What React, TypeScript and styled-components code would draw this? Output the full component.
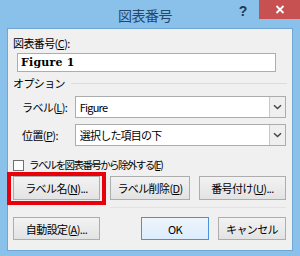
import styled, { createGlobalStyle } from 'styled-components';

const GlobalStyle = createGlobalStyle`
  html, body {
    margin: 0;
    padding: 0;
    background: #ffffff;
  }
  body {
    font-family: "Noto Sans CJK JP", "Noto Sans", sans-serif;
  }
`;

const Window = styled.div`
  width: 300px;
  height: 256px;
  box-sizing: border-box;
  background: #89c1eb;
  padding: 0 7px 5px;
  display: flex;
  flex-direction: column;
  overflow: hidden;
`;

const TitleBar = styled.div`
  height: 28px;
  display: grid;
  grid-template-columns: 1fr auto auto;
  align-items: start;
  margin-right: -7px;
`;

const Title = styled.div`
  grid-column: 1 / 2;
  padding-top: 5px;
  padding-left: 50px;
  text-align: center;
  font-size: 14px;
  line-height: 20px;
  color: #24476b;
  letter-spacing: -0.5px;
`;

const HelpMark = styled.div`
  width: 20px;
  margin-right: 6px;
  padding-top: 2px;
  text-align: center;
  font-family: "Liberation Sans", Arial, sans-serif;
  font-weight: bold;
  font-size: 14px;
  line-height: 18px;
  color: #1f3a55;
`;

const CloseButton = styled.div`
  width: 41px;
  height: 19px;
  background: #c75050;
  display: flex;
  align-items: center;
  justify-content: center;
`;

const Client = styled.div`
  flex: 1;
  background: #f0f0f0;
  border: 1px solid #6fa6d4;
  padding: 6px 6px 0 5px;
  display: flex;
  flex-direction: column;
  font-size: 11px;
  color: #000;
`;

const Label = styled.div`
  line-height: 16px;
  white-space: nowrap;
  letter-spacing: -0.6px;
`;

const TextBox = styled.div`
  margin: 2px 0 0 4px;
  width: 259px;
  height: 19px;
  box-sizing: border-box;
  background: #fff;
  border: 1px solid #abadb3;
  padding-left: 3px;
  font-family: "DejaVu Serif", "Liberation Serif", serif;
  font-weight: bold;
  font-size: 11px;
  line-height: 17px;
  letter-spacing: 0.2px;
`;

const Legend = styled.div`
  margin-top: 3px;
  display: flex;
  align-items: center;
  gap: 6px;
  line-height: 16px;
  letter-spacing: -0.6px;
  &::after {
    content: '';
    flex: 1;
    height: 1px;
    background: #dcdcdc;
    margin-right: -1px;
  }
`;

const FieldRow = styled.div<{ $gap: number }>`
  margin-top: ${(p) => p.$gap}px;
  display: flex;
  align-items: center;
`;

const FieldLabel = styled.div`
  width: 62px;
  box-sizing: border-box;
  padding-left: 9px;
  line-height: 16px;
  white-space: nowrap;
  letter-spacing: -0.6px;
`;

const Select = styled.div`
  width: 212px;
  height: 22px;
  box-sizing: border-box;
  background: #fff;
  border: 1px solid #acacac;
  display: flex;
  align-items: stretch;
`;

const SelectValue = styled.div`
  flex: 1;
  padding-left: 4px;
  line-height: 20px;
  font-size: 11px;
  letter-spacing: -0.8px;
`;

const DropButton = styled.div`
  width: 15px;
  border-left: 1px solid #c8c8c8;
  background: #efefef;
  display: flex;
  align-items: center;
  justify-content: center;
`;

const CheckRow = styled.div`
  margin-top: 11px;
  display: flex;
  align-items: center;
  gap: 5px;
  line-height: 16px;
  font-size: 10.5px;
  letter-spacing: -1.6px;
`;

const CheckBox = styled.div`
  width: 11px;
  height: 11px;
  box-sizing: border-box;
  background: #fff;
  border: 1px solid #707070;
`;

const ButtonRow = styled.div<{ $top: number }>`
  margin-top: ${(p) => p.$top}px;
  display: flex;
`;

const Button = styled.div<{ $width: number; $gap?: number; $default?: boolean; $height?: number }>`
  position: relative;
  width: ${(p) => p.$width}px;
  height: ${(p) => p.$height ?? 23}px;
  margin-left: ${(p) => p.$gap ?? 0}px;
  box-sizing: border-box;
  border: 1px solid ${(p) => (p.$default ? '#4a93dc' : '#adadad')};
  background: ${(p) => (p.$default ? 'linear-gradient(#eef5fc, #dcecfc)' : 'linear-gradient(#f2f2f2, #e3e3e3)')};
  display: flex;
  align-items: center;
  justify-content: center;
  line-height: 16px;
  white-space: nowrap;
  letter-spacing: -0.6px;
`;

const Highlight = styled.div`
  position: absolute;
  left: -7px;
  top: -5px;
  right: -7px;
  bottom: -6px;
  border: 4px solid #e8000b;
  pointer-events: none;
`;

const Separator = styled.div`
  margin: 7px 0 0 97px;
  height: 1px;
  background: #e2e2e2;
`;

const Chevron = () => (
  <svg width="9" height="6" viewBox="0 0 9 6">
    <path d="M1 1.2 L4.5 4.6 L8 1.2" fill="none" stroke="#444" strokeWidth="1.4" />
  </svg>
);

const App = () => {
  return (
    <>
      <GlobalStyle />
      <Window>
        <TitleBar>
          <Title>図表番号</Title>
          <HelpMark>?</HelpMark>
          <CloseButton>
            <svg width="10" height="9" viewBox="0 0 10 9">
              <path d="M1.5 1 L8.5 8 M8.5 1 L1.5 8" stroke="#fff" strokeWidth="1.8" />
            </svg>
          </CloseButton>
        </TitleBar>
        <Client>
          <Label>
            図表番号(<u>C</u>):
          </Label>
          <TextBox>Figure 1</TextBox>
          <Legend>オプション</Legend>
          <FieldRow $gap={5}>
            <FieldLabel>
              ラベル(<u>L</u>):
            </FieldLabel>
            <Select>
              <SelectValue>Figure</SelectValue>
              <DropButton>
                <Chevron />
              </DropButton>
            </Select>
          </FieldRow>
          <FieldRow $gap={6}>
            <FieldLabel>
              位置(<u>P</u>):
            </FieldLabel>
            <Select>
              <SelectValue>選択した項目の下</SelectValue>
              <DropButton>
                <Chevron />
              </DropButton>
            </Select>
          </FieldRow>
          <CheckRow>
            <CheckBox />
            <span>
              ラベルを図表番号から除外する(<u>E</u>)
            </span>
          </CheckRow>
          <ButtonRow $top={3}>
            <Button $width={87} $height={24}>
              ラベル名(<u>N</u>)...
              <Highlight />
            </Button>
            <Button $width={80} $gap={10} $height={24}>
              ラベル削除(<u>D</u>)
            </Button>
            <Button $width={87} $gap={9} $height={24}>
              番号付け(<u>U</u>)...
            </Button>
          </ButtonRow>
          <Separator />
          <ButtonRow $top={9}>
            <Button $width={87}>
              自動設定(<u>A</u>)...
            </Button>
            <Button $width={68} $gap={41} $default>
              OK
            </Button>
            <Button $width={68} $gap={9}>
              キャンセル
            </Button>
          </ButtonRow>
        </Client>
      </Window>
    </>
  );
};

export default App;
